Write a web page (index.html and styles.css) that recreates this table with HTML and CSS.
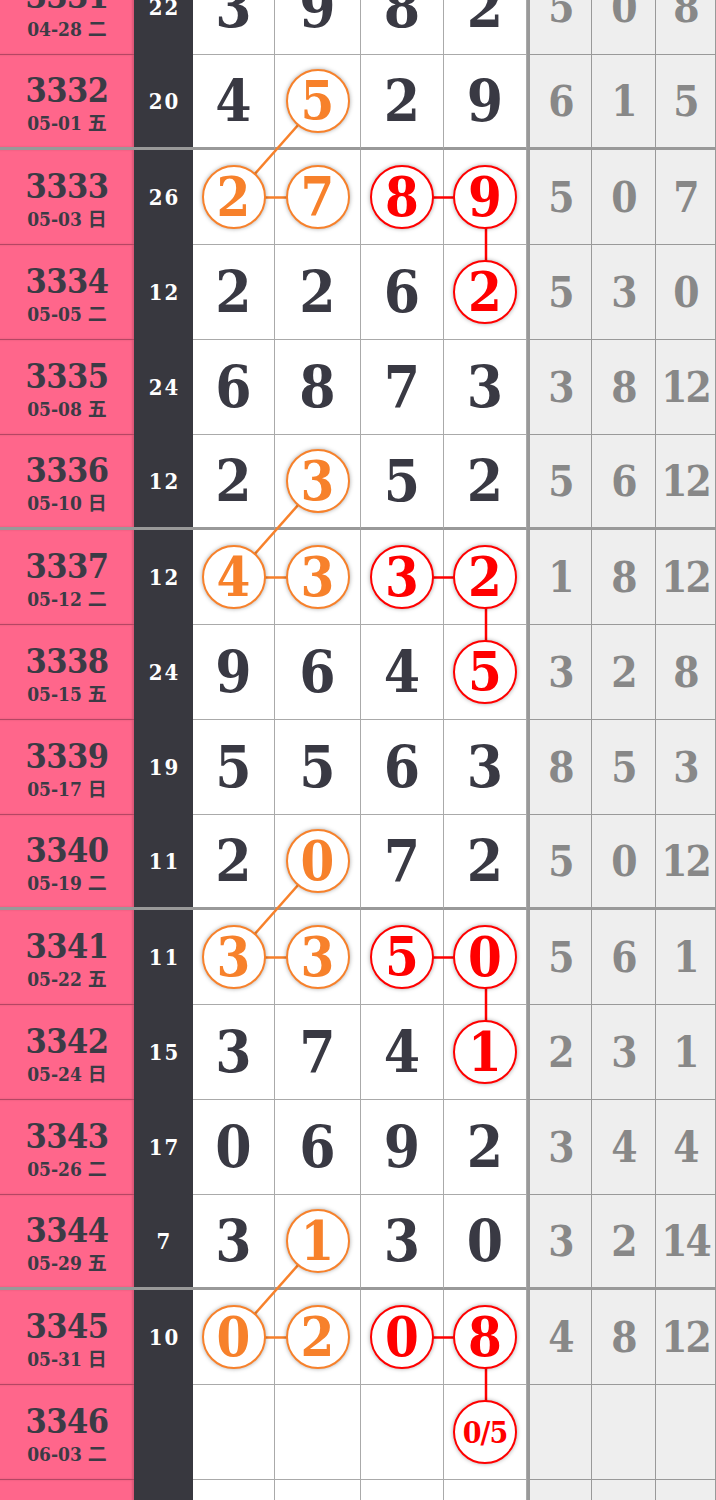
FILE: index.html
```html
<!DOCTYPE html>
<html lang="zh">
<head>
    <meta charset="UTF-8">
    <meta name="viewport" content="width=device-width, initial-scale=1.0">
    <title>走势图</title>
    <link rel="stylesheet" href="styles.css">
</head>
<body>

<div class="board">
    <!-- 连线 -->
    <svg class="links" width="716" height="1615" viewBox="0 0 716 1615">
        <g stroke="#f7812b" stroke-width="2.5" fill="none">
            <line x1="318" y1="142.5" x2="234" y2="237.5"/>
            <line x1="234" y1="237.5" x2="318" y2="237.5"/>
            <line x1="318" y1="522.5" x2="234" y2="617.5"/>
            <line x1="234" y1="617.5" x2="318" y2="617.5"/>
            <line x1="318" y1="902.5" x2="234" y2="997.5"/>
            <line x1="234" y1="997.5" x2="318" y2="997.5"/>
            <line x1="318" y1="1282.5" x2="234" y2="1377.5"/>
            <line x1="234" y1="1377.5" x2="318" y2="1377.5"/>
        </g>
        <g stroke="#f00" stroke-width="2.5" fill="none">
            <line x1="403" y1="237.5" x2="486" y2="237.5"/>
            <line x1="486" y1="237.5" x2="486" y2="332.5"/>
            <line x1="403" y1="617.5" x2="486" y2="617.5"/>
            <line x1="486" y1="617.5" x2="486" y2="712.5"/>
            <line x1="403" y1="997.5" x2="486" y2="997.5"/>
            <line x1="486" y1="997.5" x2="486" y2="1092.5"/>
            <line x1="403" y1="1377.5" x2="486" y2="1377.5"/>
            <line x1="486" y1="1377.5" x2="486" y2="1472.5"/>
        </g>
    </svg>

    <div class="row">
        <div class="issue"><b>3331</b><span>04-28 二</span></div>
        <div class="sum">22</div>
        <div class="d">3</div><div class="d">9</div><div class="d">8</div><div class="d">2</div>
        <div class="g first">5</div><div class="g">0</div><div class="g">8</div>
    </div>
    <div class="row end">
        <div class="issue"><b>3332</b><span>05-01 五</span></div>
        <div class="sum">20</div>
        <div class="d">4</div><div class="d"><span class="ball o">5</span></div><div class="d">2</div><div class="d">9</div>
        <div class="g first">6</div><div class="g">1</div><div class="g">5</div>
    </div>
    <div class="row">
        <div class="issue"><b>3333</b><span>05-03 日</span></div>
        <div class="sum">26</div>
        <div class="d"><span class="ball o">2</span></div><div class="d"><span class="ball o">7</span></div><div class="d"><span class="ball r">8</span></div><div class="d"><span class="ball r">9</span></div>
        <div class="g first">5</div><div class="g">0</div><div class="g">7</div>
    </div>
    <div class="row">
        <div class="issue"><b>3334</b><span>05-05 二</span></div>
        <div class="sum">12</div>
        <div class="d">2</div><div class="d">2</div><div class="d">6</div><div class="d"><span class="ball r">2</span></div>
        <div class="g first">5</div><div class="g">3</div><div class="g">0</div>
    </div>
    <div class="row">
        <div class="issue"><b>3335</b><span>05-08 五</span></div>
        <div class="sum">24</div>
        <div class="d">6</div><div class="d">8</div><div class="d">7</div><div class="d">3</div>
        <div class="g first">3</div><div class="g">8</div><div class="g">12</div>
    </div>
    <div class="row end">
        <div class="issue"><b>3336</b><span>05-10 日</span></div>
        <div class="sum">12</div>
        <div class="d">2</div><div class="d"><span class="ball o">3</span></div><div class="d">5</div><div class="d">2</div>
        <div class="g first">5</div><div class="g">6</div><div class="g">12</div>
    </div>
    <div class="row">
        <div class="issue"><b>3337</b><span>05-12 二</span></div>
        <div class="sum">12</div>
        <div class="d"><span class="ball o">4</span></div><div class="d"><span class="ball o">3</span></div><div class="d"><span class="ball r">3</span></div><div class="d"><span class="ball r">2</span></div>
        <div class="g first">1</div><div class="g">8</div><div class="g">12</div>
    </div>
    <div class="row">
        <div class="issue"><b>3338</b><span>05-15 五</span></div>
        <div class="sum">24</div>
        <div class="d">9</div><div class="d">6</div><div class="d">4</div><div class="d"><span class="ball r">5</span></div>
        <div class="g first">3</div><div class="g">2</div><div class="g">8</div>
    </div>
    <div class="row">
        <div class="issue"><b>3339</b><span>05-17 日</span></div>
        <div class="sum">19</div>
        <div class="d">5</div><div class="d">5</div><div class="d">6</div><div class="d">3</div>
        <div class="g first">8</div><div class="g">5</div><div class="g">3</div>
    </div>
    <div class="row end">
        <div class="issue"><b>3340</b><span>05-19 二</span></div>
        <div class="sum">11</div>
        <div class="d">2</div><div class="d"><span class="ball o">0</span></div><div class="d">7</div><div class="d">2</div>
        <div class="g first">5</div><div class="g">0</div><div class="g">12</div>
    </div>
    <div class="row">
        <div class="issue"><b>3341</b><span>05-22 五</span></div>
        <div class="sum">11</div>
        <div class="d"><span class="ball o">3</span></div><div class="d"><span class="ball o">3</span></div><div class="d"><span class="ball r">5</span></div><div class="d"><span class="ball r">0</span></div>
        <div class="g first">5</div><div class="g">6</div><div class="g">1</div>
    </div>
    <div class="row">
        <div class="issue"><b>3342</b><span>05-24 日</span></div>
        <div class="sum">15</div>
        <div class="d">3</div><div class="d">7</div><div class="d">4</div><div class="d"><span class="ball r">1</span></div>
        <div class="g first">2</div><div class="g">3</div><div class="g">1</div>
    </div>
    <div class="row">
        <div class="issue"><b>3343</b><span>05-26 二</span></div>
        <div class="sum">17</div>
        <div class="d">0</div><div class="d">6</div><div class="d">9</div><div class="d">2</div>
        <div class="g first">3</div><div class="g">4</div><div class="g">4</div>
    </div>
    <div class="row end">
        <div class="issue"><b>3344</b><span>05-29 五</span></div>
        <div class="sum">7</div>
        <div class="d">3</div><div class="d"><span class="ball o">1</span></div><div class="d">3</div><div class="d">0</div>
        <div class="g first">3</div><div class="g">2</div><div class="g">14</div>
    </div>
    <div class="row">
        <div class="issue"><b>3345</b><span>05-31 日</span></div>
        <div class="sum">10</div>
        <div class="d"><span class="ball o">0</span></div><div class="d"><span class="ball o">2</span></div><div class="d"><span class="ball r">0</span></div><div class="d"><span class="ball r">8</span></div>
        <div class="g first">4</div><div class="g">8</div><div class="g">12</div>
    </div>
    <div class="row">
        <div class="issue"><b>3346</b><span>06-03 二</span></div>
        <div class="sum"></div>
        <div class="d"></div><div class="d"></div><div class="d"></div><div class="d"><span class="ball r small">0/5</span></div>
        <div class="g first"></div><div class="g"></div><div class="g"></div>
    </div>
    <div class="row">
        <div class="issue"></div>
        <div class="sum"></div>
        <div class="d"></div><div class="d"></div><div class="d"></div><div class="d"></div>
        <div class="g first"></div><div class="g"></div><div class="g"></div>
    </div>
</div>

</body>
</html>
```

FILE: styles.css
```css
body {
    margin: 0;
    background: #fff;
    overflow: hidden;
    font-family: "DejaVu Serif Condensed", "DejaVu Serif", "Noto Sans CJK SC", serif;
    font-stretch: condensed;
    font-weight: bold;
}

.board {
    position: relative;
    width: 716px;
    margin-top: -40px;
}

.links {
    position: absolute;
    top: 0;
    left: 0;
    z-index: 1;
    pointer-events: none;
}

.row {
    display: grid;
    grid-template-columns: 134px 59px 82px 86px 83px 83px 65px 64px 60px;
    height: 95px;
}

.row > div {
    box-sizing: border-box;
    display: flex;
    align-items: center;
    justify-content: center;
    border-bottom: 1px solid #aaa;
}

.row.end > div {
    border-bottom: 3px solid #999;
}

/* 期号 */
.issue {
    flex-direction: column;
    background: #ff668b;
    color: #3b3b45;
    box-shadow: inset -2px 0 2px rgba(0, 0, 0, 0.15);
    padding-top: 4px;
}
.row > .issue {
    border-bottom-color: rgba(90, 30, 50, 0.45);
}
.issue b {
    font-size: 34px;
    line-height: 36px;
    letter-spacing: -0.5px;
}
.issue span {
    font-size: 19px;
    line-height: 24px;
    margin-top: 3px;
}

/* 和值 */
.sum {
    background: #38383f;
    color: #fff;
    font-size: 22px;
    letter-spacing: 2px;
    padding-left: 2px;
}
.row > .sum {
    border-bottom-color: #38383f;
}

/* 号码 */
.d {
    background: #fff;
    color: #393943;
    font-size: 58px;
    border-right: 1px solid #aaa;
}

.ball {
    position: relative;
    z-index: 2;
    box-sizing: border-box;
    width: 64px;
    height: 64px;
    border-radius: 50%;
    background: #fff;
    display: flex;
    align-items: center;
    justify-content: center;
    font-size: 54px;
    box-shadow: 0 0 4px rgba(0, 0, 0, 0.35);
}
.ball.o {
    color: #f7812b;
    border: 2.5px solid #f7812b;
}
.ball.r {
    color: #f00;
    border: 2.5px solid #f00;
}
.ball.small {
    font-size: 30px;
    letter-spacing: -1px;
}

/* 遗漏 */
.g {
    background: #eee;
    color: #888;
    font-size: 42px;
    letter-spacing: -2px;
    padding-right: 0;
    border-right: 1px solid #999;
}
.row > .g {
    border-bottom-color: #999;
}
.g.first {
    border-left: 3px solid #999;
}
```
